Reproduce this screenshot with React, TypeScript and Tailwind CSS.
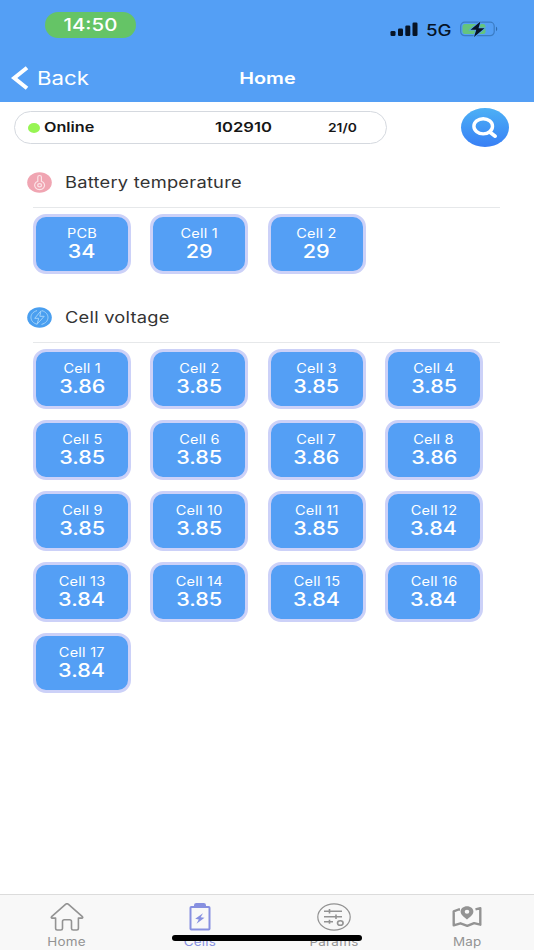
import type { ReactNode } from 'react';

const temperatures = [
  { label: 'PCB', value: '34' },
  { label: 'Cell 1', value: '29' },
  { label: 'Cell 2', value: '29' },
];

const voltages = [
  '3.86', '3.85', '3.85', '3.85',
  '3.85', '3.85', '3.86', '3.86',
  '3.85', '3.85', '3.85', '3.84',
  '3.84', '3.85', '3.84', '3.84',
  '3.84',
].map((value, i) => ({ label: `Cell ${i + 1}`, value }));

function StatusBar() {
  return (
    <div className="flex h-[52px] justify-between pl-[45px] pr-[36px]">
      <div className="mt-3 flex h-[26px] w-[91px] items-center justify-center rounded-full bg-[#65c466]">
        <span className="scale-x-[1.2] pt-px text-[17px] font-medium leading-none">14:50</span>
      </div>
      <div className="mt-[19px] flex h-5 items-center text-[#071426]">
        <svg width="28" height="14" viewBox="0 0 28 14" fill="currentColor">
          <rect x="0.5" y="9" width="5" height="5" rx="1.3" />
          <rect x="8" y="6.5" width="5" height="7.5" rx="1.3" />
          <rect x="15.3" y="3.5" width="5" height="10.5" rx="1.3" />
          <rect x="22.5" y="0.5" width="5" height="13.5" rx="1.3" />
        </svg>
        <span className="ml-2 w-[26px] origin-left scale-x-[1.17] pt-px text-[16px] font-medium leading-none">5G</span>
        <svg className="ml-2" width="38" height="18" viewBox="0 0 38 18">
          <rect x="0.7" y="2.2" width="33.5" height="13.5" rx="4" fill="none" stroke="#3b7cc4" strokeWidth="1.2" />
          <rect x="2.5" y="4" width="23" height="10" rx="2.5" fill="#65c47c" />
          <path d="M36 6.8c1.6.6 1.6 3.8 0 4.4z" fill="#2f6cae" />
          <path d="M20.5 1.5 10.5 9.8h5.8L14 17l10.5-8.8h-6z" fill="#071426" stroke="#549ff5" strokeWidth="1.6" paintOrder="stroke" />
        </svg>
      </div>
    </div>
  );
}

function NavBar() {
  return (
    <div className="grid h-[50px] grid-cols-3 items-center pt-px">
      <div className="flex items-center pl-[11px]">
        <svg width="18" height="24" viewBox="0 0 18 24" fill="none" stroke="currentColor" strokeWidth="4">
          <path d="M16 1.8 3.2 12 16 22.2" />
        </svg>
        <span className="ml-[8px] origin-left scale-x-[1.2] pt-px text-[18.5px] leading-none">Back</span>
      </div>
      <div className="flex justify-center">
        <span className="scale-x-[1.2] pt-px text-[16.5px] font-semibold leading-none">Home</span>
      </div>
    </div>
  );
}

function DeviceRow() {
  return (
    <div className="flex items-center justify-between pl-[14px] pr-[25px] pt-[6px]">
      <div className="flex h-[33px] w-[373px] items-center rounded-full border border-[#d5d9df] text-[#161616]">
        <span className="ml-[13px] h-[10px] w-[12px] rounded-[50%] bg-[#97f553]" />
        <span className="ml-[4px] w-[171px] pt-px text-[13.5px] font-semibold leading-none">
          <span className="inline-block origin-left scale-x-[1.2]">Online</span>
        </span>
        <span className="w-[113px] pt-px text-[13.5px] font-semibold leading-none">
          <span className="inline-block origin-left scale-x-[1.23]">102910</span>
        </span>
        <span className="pt-px text-[12px] font-semibold leading-none">
          <span className="inline-block origin-left scale-x-[1.15]">21/0</span>
        </span>
      </div>
      <button className="flex h-[39px] w-12 items-center justify-center rounded-[50%] bg-gradient-to-b from-[#4db0f5] to-[#397ff5]">
        <svg width="26" height="22" viewBox="0 0 26 22" fill="none" stroke="#fff">
          <ellipse cx="11.2" cy="9.3" rx="9.3" ry="7.6" strokeWidth="3.4" />
          <path d="m18 15.2 5.2 4" strokeWidth="3.6" strokeLinecap="round" />
        </svg>
      </button>
    </div>
  );
}

function TemperatureIcon() {
  return (
    <svg width="25" height="21" viewBox="0 0 25 21" fill="none" stroke="#fbe3e7">
      <ellipse cx="12.5" cy="10.5" rx="12.3" ry="10.3" fill="#f0a5b2" stroke="none" />
      <path d="M10.8 9.3V5a1.8 1.5 0 0 1 3.6 0v4.3a5 4.3 0 1 1-3.6 0z" strokeWidth="1.2" />
      <ellipse cx="12.6" cy="13.2" rx="1.9" ry="1.6" strokeWidth="1.3" />
    </svg>
  );
}

function VoltageIcon() {
  return (
    <svg width="25" height="21" viewBox="0 0 25 21" fill="none" stroke="#a3d3fa">
      <ellipse cx="12.5" cy="10.5" rx="12.3" ry="10.3" fill="#4a9ff0" stroke="none" />
      <path d="M10 3.6C1.5 6 2.3 15.5 10.3 17.3M14.8 3.6c8.3 2.2 8.3 11.7-.3 13.8" strokeWidth="1" />
      <path d="m14 3.8-6.3 7.5h4L10.2 17l7-7.7h-4.4z" strokeWidth="1" strokeLinejoin="round" />
    </svg>
  );
}

function Section({ icon, title, items }: { icon: ReactNode; title: string; items: { label: string; value: string }[] }) {
  return (
    <section>
      <div className="flex h-[50px] items-center pl-[27px]">
        {icon}
        <h2 className="ml-[12.5px] origin-left scale-x-[1.18] pt-[2px] text-[15.5px] leading-none tracking-[0.2px] text-[#333]">{title}</h2>
      </div>
      <div className="ml-[33px] mr-[34px] h-px bg-[#e6e8ea]" />
      <div className="mt-[6px] grid grid-cols-[repeat(4,98px)] gap-x-[19.3px] gap-y-[11px] pl-[33px]">
        {items.map((item) => (
          <div
            key={item.label}
            className="flex h-[60px] flex-col items-center rounded-[13px] border-3 border-[#ccd1f8] bg-[#549ff5] pt-[9px] text-white"
          >
            <span className="scale-x-[1.16] text-[12.5px] leading-[15px] tracking-[0.2px]">{item.label}</span>
            <span className="scale-x-[1.2] text-[18px] font-medium leading-[21px]">{item.value}</span>
          </div>
        ))}
      </div>
    </section>
  );
}

const tabs = [
  {
    label: 'Home',
    icon: (
      <svg width="34" height="28" viewBox="0 0 34 28" fill="none" stroke="currentColor" strokeWidth="1.6" strokeLinejoin="round">
        <path d="M15.5 1.3a2.3 2 0 0 1 3 0L32.4 13.7c.6.6.3 1.4-.6 1.4h-3.4v10.2c0 1.1-.5 1.7-1.7 1.7h-3.5c-1.1 0-1.7-.6-1.7-1.6v-6.8c0-1.2-.6-1.8-1.8-1.8h-5.4c-1.2 0-1.8.6-1.8 1.8v6.8c0 1-.6 1.6-1.7 1.6H7.3c-1.2 0-1.7-.6-1.7-1.7V15.1H2.2c-.9 0-1.2-.8-.6-1.4z" />
      </svg>
    ),
  },
  {
    label: 'Cells',
    icon: (
      <svg width="22" height="28" viewBox="0 0 22 28" fill="none" stroke="currentColor" strokeWidth="2">
        <rect x="1.5" y="4" width="19" height="22.5" rx="0.8" />
        <path d="M6 3V2.2C6 1.3 6.4 1 7.2 1h7.6c.8 0 1.2.3 1.2 1.2V3z" fill="currentColor" />
        <path d="m14 10.2-7.8 5.6 3.6.6-2.3 4.4 8-6-3.8-.6z" fill="currentColor" stroke="none" />
      </svg>
    ),
  },
  {
    label: 'Params',
    icon: (
      <svg width="34" height="28" viewBox="0 0 34 28" fill="none" stroke="currentColor" strokeWidth="1.6">
        <ellipse cx="17" cy="14" rx="16.2" ry="13.2" strokeWidth="1.2" />
        <path d="M7 8.2h18M7 13.8h18M7 18.8h9M12.5 6v4.4M19 11.6V16M12.5 16.8v4" />
        <ellipse cx="23.3" cy="20" rx="2.8" ry="2.3" />
      </svg>
    ),
  },
  {
    label: 'Map',
    icon: (
      <svg width="30" height="28" viewBox="0 0 30 28" fill="none" stroke="currentColor" strokeWidth="2.4">
        <path d="M8 6.5H6.5L1.7 8.3v14l6.8-2 6.8 2.6 6.8-2.8 6.2 1.6V5.2l-4.8 1.2" strokeLinejoin="round" />
        <path fillRule="evenodd" stroke="none" fill="currentColor" d="M15 3.2c-3.6 0-6.4 2.3-6.4 5.4 0 3.6 4 5.8 6.4 8 2.4-2.2 6.4-4.4 6.4-8 0-3.1-2.8-5.4-6.4-5.4zm0 3.5a2.3 2 0 1 1 0 4 2.3 2 0 0 1 0-4z" />
      </svg>
    ),
  },
];

function TabBar() {
  return (
    <nav className="relative grid h-14 grid-cols-4 border-t border-[#dcdcdc] bg-[#f8f8f8]">
      {tabs.map((tab) => (
        <div
          key={tab.label}
          className={`flex flex-col items-center pt-2 ${tab.label === 'Cells' ? 'text-[#8790e0]' : 'text-[#939393]'}`}
        >
          {tab.icon}
          <span className="mt-[5px] scale-x-[1.17] text-[11.5px] leading-[12px] tracking-[0.2px]">{tab.label}</span>
        </div>
      ))}
      {/* home indicator */}
      <div className="absolute left-[172px] top-[40px] h-[6px] w-[190px] rounded-full bg-black" />
    </nav>
  );
}

export default function App() {
  return (
    <div className="flex h-[950px] w-[534px] flex-col overflow-hidden bg-white font-['Inter',sans-serif]">
      <header className="h-[102px] bg-[#549ff5] text-white">
        <StatusBar />
        <NavBar />
      </header>
      <main className="flex-1">
        <DeviceRow />
        <div className="mt-[10px]">
          <Section icon={<TemperatureIcon />} title="Battery temperature" items={temperatures} />
        </div>
        <div className="mt-[18px]">
          <Section icon={<VoltageIcon />} title="Cell voltage" items={voltages} />
        </div>
      </main>
      <TabBar />
    </div>
  );
}
